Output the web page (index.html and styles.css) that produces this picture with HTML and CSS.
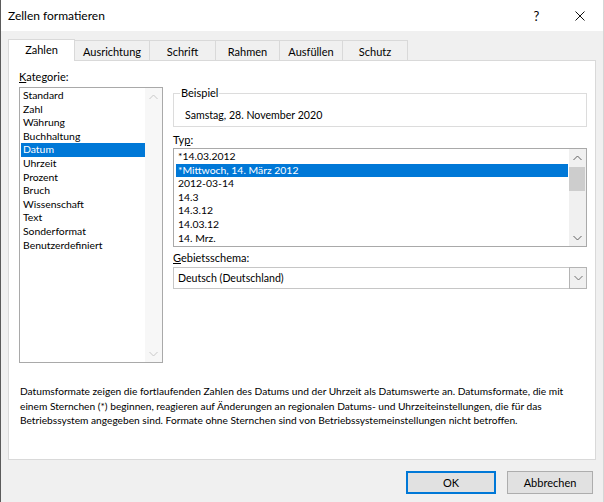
FILE: index.html
```html
<!DOCTYPE html>
<html lang="de">
<head>
<meta charset="utf-8">
<title>Zellen formatieren</title>
<link rel="stylesheet" href="styles.css">
</head>
<body>
<div class="window">
  <div class="titlebar">
    <span class="title">Zellen formatieren</span>
    <span class="tb-btn help">?</span>
    <span class="tb-btn">
      <svg width="10" height="10" viewBox="0 0 10 10"><path d="M0.5 0.5 L9.5 9.5 M9.5 0.5 L0.5 9.5" stroke="#111" stroke-width="1" fill="none"/></svg>
    </span>
  </div>
  <div class="client">
    <div class="tabs">
      <div class="tab active">Zahlen</div>
      <div class="tab">Ausrichtung</div>
      <div class="tab">Schrift</div>
      <div class="tab">Rahmen</div>
      <div class="tab">Ausfüllen</div>
      <div class="tab">Schutz</div>
    </div>
    <div class="panel">
      <div class="columns">
        <div class="left">
          <div class="label"><u>K</u>ategorie:</div>
          <div class="listbox cat">
            <div class="items">
              <div class="item">Standard</div>
              <div class="item">Zahl</div>
              <div class="item">Währung</div>
              <div class="item">Buchhaltung</div>
              <div class="item sel">Datum</div>
              <div class="item">Uhrzeit</div>
              <div class="item">Prozent</div>
              <div class="item">Bruch</div>
              <div class="item">Wissenschaft</div>
              <div class="item">Text</div>
              <div class="item">Sonderformat</div>
              <div class="item">Benutzerdefiniert</div>
            </div>
            <div class="vscroll disabled">
              <div class="arrow"><svg width="9" height="6" viewBox="0 0 9 6"><path d="M0.5 5 L4.5 1 L8.5 5" stroke="currentColor" fill="none"/></svg></div>
              <div class="arrow bottom"><svg width="9" height="6" viewBox="0 0 9 6"><path d="M0.5 1 L4.5 5 L8.5 1" stroke="currentColor" fill="none"/></svg></div>
            </div>
          </div>
        </div>
        <div class="right">
          <fieldset class="sample">
            <legend>Beispiel</legend>
            <div class="sample-text">Samstag, 28. November 2020</div>
          </fieldset>
          <div class="label typ">Ty<u>p</u>:</div>
          <div class="listbox type">
            <div class="items">
              <div class="item">*14.03.2012</div>
              <div class="item sel">*Mittwoch, 14. März 2012</div>
              <div class="item">2012-03-14</div>
              <div class="item">14.3</div>
              <div class="item">14.3.12</div>
              <div class="item">14.03.12</div>
              <div class="item">14. Mrz.</div>
            </div>
            <div class="vscroll">
              <div class="arrow"><svg width="9" height="6" viewBox="0 0 9 6"><path d="M0.5 5 L4.5 1 L8.5 5" stroke="currentColor" fill="none"/></svg></div>
              <div class="thumb"></div>
              <div class="arrow bottom"><svg width="9" height="6" viewBox="0 0 9 6"><path d="M0.5 1 L4.5 5 L8.5 1" stroke="currentColor" fill="none"/></svg></div>
            </div>
          </div>
          <div class="label geb"><u>G</u>ebietsschema:</div>
          <div class="combo">
            <span class="combo-text">Deutsch (Deutschland)</span>
            <span class="combo-btn"><svg width="9" height="6" viewBox="0 0 9 6"><path d="M0.5 1 L4.5 5 L8.5 1" stroke="currentColor" fill="none"/></svg></span>
          </div>
        </div>
      </div>
      <p class="desc">Datumsformate zeigen die fortlaufenden Zahlen des Datums und der Uhrzeit als Datumswerte an. Datumsformate, die mit<br>einem Sternchen (*) beginnen, reagieren auf Änderungen an regionalen Datums- und Uhrzeiteinstellungen, die für das<br>Betriebssystem angegeben sind. Formate ohne Sternchen sind von Betriebssystemeinstellungen nicht betroffen.</p>
    </div>
    <div class="buttons">
      <button class="btn default">OK</button>
      <button class="btn cancel">Abbrechen</button>
    </div>
  </div>
</div>
</body>
</html>
```
FILE: styles.css
```css
* { box-sizing: border-box; }
html, body { margin: 0; padding: 0; }
body {
  width: 604px;
  height: 502px;
  overflow: hidden;
  font-family: Lato, "Noto Sans", sans-serif;
  font-size: 10.4px;
  color: #000;
}
.window {
  width: 604px;
  height: 502px;
  background: #f0f0f0;
  border-left: 1px solid #5b5b5b;
  border-right: 1px solid #d6d6d6;
  display: flex;
  flex-direction: column;
}
.titlebar {
  height: 31px;
  flex: none;
  background: #fff;
  display: flex;
  align-items: center;
  padding-left: 7px;
}
.title { flex: 1; font-size: 12px; }
.tb-btn {
  width: 46px;
  height: 31px;
  display: flex;
  align-items: center;
  justify-content: center;
  font-size: 13px;
}
.tb-btn.help { padding-left: 5px; }
.client {
  flex: 1;
  display: flex;
  flex-direction: column;
  padding: 8px 7px 0 7px;
}
.tabs {
  display: flex;
  align-items: flex-end;
  height: 21px;
  position: relative;
  z-index: 1;
  font-size: 11px;
}
.tab {
  height: 20px;
  border: 1px solid #d9d9d9;
  border-bottom: none;
  background: #f0f0f0;
  display: flex;
  align-items: center;
  justify-content: center;
  margin-left: -1px;
  padding-top: 1px;
}
.tab:nth-child(1) { width: 67px; }
.tab:nth-child(2) { width: 76px; }
.tab:nth-child(3) { width: 67px; }
.tab:nth-child(4) { width: 65px; }
.tab:nth-child(5) { width: 64px; }
.tab:nth-child(6) { width: 66px; }
.tab.active {
  height: 22px;
  margin-left: 0;
  margin-bottom: -1px;
  background: #fff;
  position: relative;
  z-index: 2;
  padding-top: 0;
  padding-bottom: 2px;
}
.panel {
  height: 400px;
  flex: none;
  width: 588px;
  background: #fff;
  border: 1px solid #d9d9d9;
  padding: 9px 8px 0 10px;
}
.columns { display: flex; gap: 10px; }
.left { width: 144px; }
.right { width: 414px; }
.label { height: 14px; line-height: 14px; white-space: nowrap; font-size: 11px; }
.listbox {
  border: 1px solid #a9a9a9;
  background: #fff;
  display: flex;
}
.cat { margin-top: 3px; height: 276px; }
.items { flex: 1; padding-top: 1px; min-width: 0; }
.item {
  height: 13.6px;
  line-height: 13.6px;
  padding-left: 2px;
  margin-left: 1px;
  white-space: nowrap;
}
.item.sel { background: #0078d7; color: #fff; }
.type .item { margin-left: 2px; margin-right: 1px; }
.vscroll {
  width: 17px;
  flex: none;
  display: flex;
  flex-direction: column;
  background: #f0f0f0;
  color: #606060;
}
.vscroll.disabled { background: #f7f7f7; color: #c8c8c8; }
.arrow {
  height: 17px;
  display: flex;
  align-items: center;
  justify-content: center;
}
.arrow.bottom { margin-top: auto; }
.thumb {
  height: 24px;
  margin: 1px 1px 0 0;
  background: #cdcdcd;
}
.sample {
  margin: 16px 0 0;
  border: 1px solid #dcdcdc;
  padding: 8px 0 4px 6px;
  min-width: 0;
}
.sample legend { padding: 0 1px; line-height: 14px; font-size: 11px; }
.sample-text { line-height: 14px; padding-left: 5px; font-size: 10.6px; }
.typ { margin-top: 6px; }
.type { margin-top: 1px; height: 99px; }
.geb { margin-top: 4px; }
.combo {
  margin-top: 2px;
  height: 22px;
  border: 1px solid #c6c6c6;
  display: flex;
  align-items: center;
  background: #fff;
}
.combo-text { flex: 1; padding-left: 4px; font-size: 10.6px; }
.combo-btn {
  width: 18px;
  height: 22px;
  margin: -1px -1px -1px 0;
  border: 1px solid #b4b4b4;
  background: #f0f0f0;
  color: #707070;
  display: flex;
  align-items: center;
  justify-content: center;
}
.desc {
  margin: 21px 0 0 1px;
  line-height: 14.5px;
  white-space: nowrap;
  font-size: 10.2px;
}
.buttons {
  display: flex;
  justify-content: flex-end;
  gap: 11px;
  margin-top: 11px;
  padding-right: 3px;
}
.btn {
  height: 23px;
  border: 1px solid #adadad;
  background: #e1e1e1;
  font: inherit;
  font-size: 11px;
  color: #000;
  padding: 0;
}
.btn.default { width: 90px; border: 2px solid #0078d7; }
.btn.cancel { width: 86px; }
```
